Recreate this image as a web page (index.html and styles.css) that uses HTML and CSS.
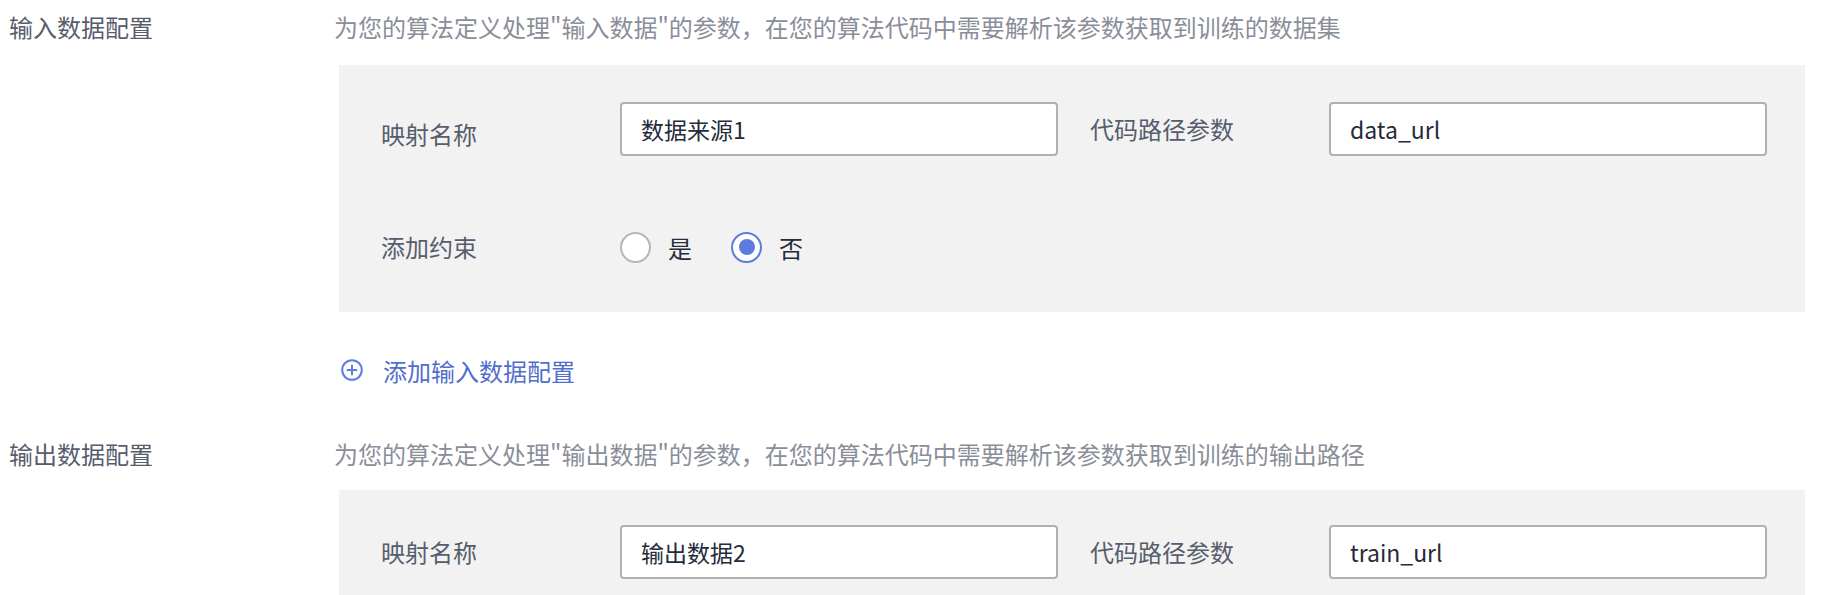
FILE: index.html
```html
<!DOCTYPE html>
<html lang="zh-CN">
<head>
<meta charset="utf-8">
<title>数据配置</title>
<link rel="stylesheet" href="styles.css">
</head>
<body>
<div class="page">
  <section class="field field-input">
    <div class="field-label">输入数据配置</div>
    <div class="field-body">
      <div class="desc">为您的算法定义处理"输入数据"的参数，在您的算法代码中需要解析该参数获取到训练的数据集</div>
      <div class="panel">
        <div class="panel-row">
          <div class="pl pl-low">映射名称</div>
          <div class="input">数据来源1</div>
          <div class="pl pl-second">代码路径参数</div>
          <div class="input">data_url</div>
        </div>
        <div class="panel-row">
          <div class="pl">添加约束</div>
          <div class="radios">
            <span class="radio"><span class="radio-box"></span><span class="radio-text">是</span></span>
            <span class="radio radio-checked"><span class="radio-box"></span><span class="radio-text">否</span></span>
          </div>
        </div>
      </div>
      <a class="add-link" href="#">
        <svg class="add-icon" width="22" height="22" viewBox="0 0 22 22" aria-hidden="true">
          <circle cx="11" cy="11" r="9.8" fill="none" stroke="currentColor" stroke-width="2"/>
          <path d="M11 6.5v9M6.5 11h9" stroke="currentColor" stroke-width="2" stroke-linecap="round"/>
        </svg>
        <span>添加输入数据配置</span>
      </a>
    </div>
  </section>
  <section class="field field-output">
    <div class="field-label">输出数据配置</div>
    <div class="field-body">
      <div class="desc">为您的算法定义处理"输出数据"的参数，在您的算法代码中需要解析该参数获取到训练的输出路径</div>
      <div class="panel">
        <div class="panel-row">
          <div class="pl">映射名称</div>
          <div class="input">输出数据2</div>
          <div class="pl pl-second">代码路径参数</div>
          <div class="input">train_url</div>
        </div>
      </div>
    </div>
  </section>
</div>
</body>
</html>
```

FILE: styles.css
```css
* { box-sizing: border-box; }

html, body {
  margin: 0;
  padding: 0;
  background: #ffffff;
}

body {
  font-family: "Noto Sans CJK SC", "Noto Sans", sans-serif;
  color: #252b3a;
  overflow: hidden;
}

.page {
  padding-left: 9px;
  width: 1821px;
  height: 595px;
  overflow: hidden;
}

.field {
  display: flex;
  align-items: flex-start;
}

.field-output {
  margin-top: 39px;
}

.field-label {
  width: 330px;
  flex: none;
  font-size: 24px;
  line-height: 36px;
  padding-top: 9px;
  color: #575d6c;
}

.field-body {
  flex: 1;
  padding-right: 16px;
  display: flex;
  flex-direction: column;
  align-items: flex-start;
}

.desc {
  font-size: 24px;
  line-height: 36px;
  padding-top: 9px;
  margin-left: -5px;
  color: #8a8e99;
  white-space: nowrap;
}

.panel {
  align-self: stretch;
  background: #f2f2f2;
  padding: 37px 37px 38px 42px;
  margin-top: 20px;
  display: flex;
  flex-direction: column;
  gap: 64px;
}

.field-output .panel {
  margin-top: 18px;
  padding-top: 35px;
}

.panel-row {
  display: flex;
  align-items: center;
  height: 54px;
}

.pl {
  width: 239px;
  flex: none;
  font-size: 24px;
  line-height: 36px;
  color: #575d6c;
}

.pl-low {
  padding-top: 10px;
}

.pl-second {
  width: 271px;
  padding-left: 32px;
}

.input {
  width: 438px;
  height: 54px;
  flex: none;
  background: #ffffff;
  border: 2px solid #adb0b8;
  border-radius: 4px;
  padding: 0 19px;
  display: flex;
  align-items: center;
  font-size: 23px;
  color: #252b3a;
}

.radios {
  display: flex;
  align-items: center;
  gap: 39px;
}

.radio {
  display: inline-flex;
  align-items: center;
  gap: 17px;
}

.radio-box {
  width: 31px;
  height: 31px;
  border: 2px solid #b5b7bf;
  border-radius: 50%;
  background: #ffffff;
  display: flex;
  align-items: center;
  justify-content: center;
}

.radio-checked .radio-box {
  border-color: #5e7ce0;
}

.radio-checked .radio-box::after {
  content: "";
  width: 16px;
  height: 16px;
  border-radius: 50%;
  background: #5e7ce0;
}

.radio-text {
  font-size: 24px;
  color: #252b3a;
}

.add-link {
  display: inline-flex;
  align-items: center;
  gap: 20px;
  margin-top: 40px;
  height: 36px;
  font-size: 24px;
  color: #526ecc;
  text-decoration: none;
  padding-left: 2px;
}

.add-icon {
  color: #5e7ce0;
  flex: none;
}
```
